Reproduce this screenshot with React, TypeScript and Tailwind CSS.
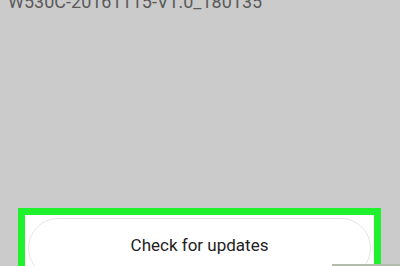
export default function App() {
  return (
    <div className="relative flex h-[266px] w-[400px] flex-col overflow-hidden bg-[#cbcbcb] font-['Roboto',sans-serif]">
      <p className="mt-[-10px] pl-[8px] text-[18px] leading-[24px] text-[#5a5a5a]">
        W530C-20161115-V1.0_180135
      </p>
      <div className="ml-[18px] mt-[194px] w-[363px] flex-1 border-[7px] border-b-0 border-[#1ff22c] bg-white px-[3px] pt-[3px]">
        <button
          type="button"
          className="flex h-[60px] w-full items-center justify-center rounded-full border border-[#e6e6e6] bg-white pb-[4px] text-[17px] text-[#1e1e1e]"
        >
          Check for updates
        </button>
      </div>
      <div className="absolute bottom-0 right-0 h-[2px] w-[68px] bg-[#b3bbab]" />
    </div>
  );
}
